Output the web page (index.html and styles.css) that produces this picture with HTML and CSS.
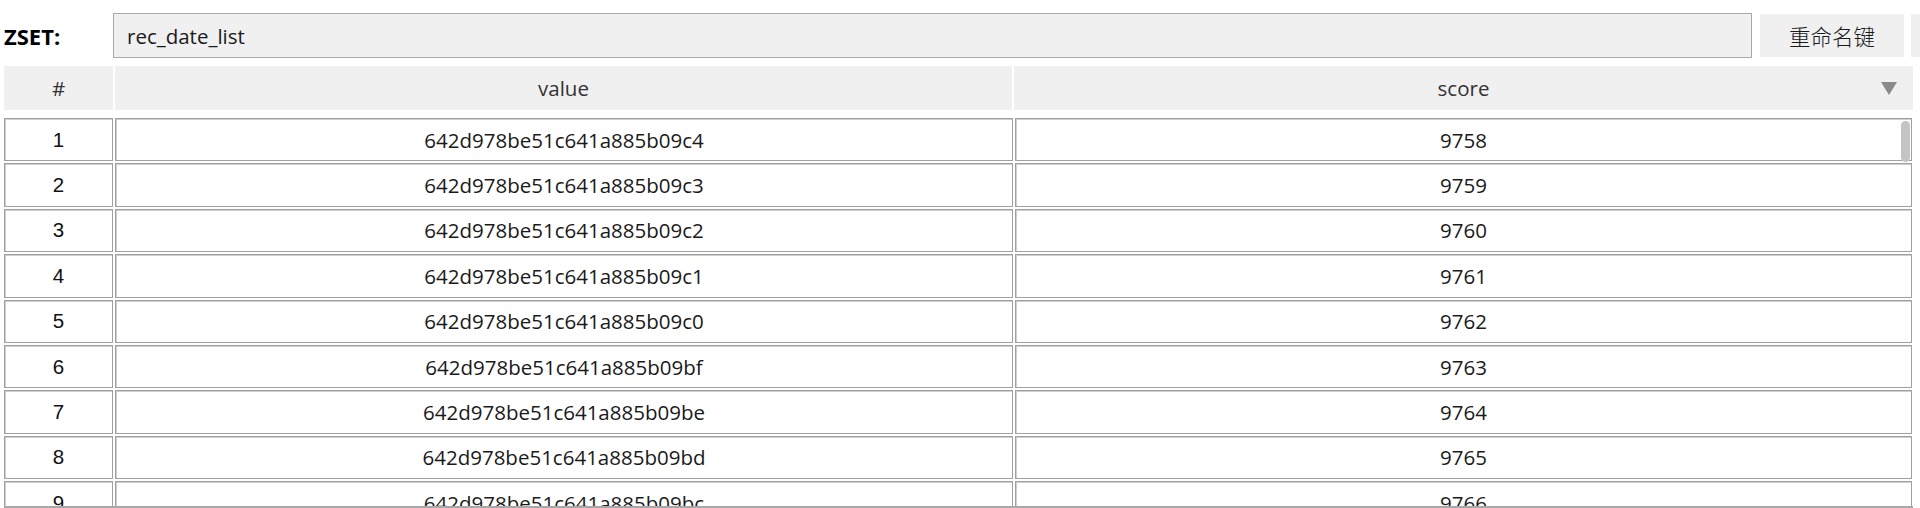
FILE: index.html
```html
<!DOCTYPE html>
<html lang="zh">
<head>
<meta charset="utf-8">
<title>ZSET</title>
<link rel="stylesheet" href="styles.css">
</head>
<body>
<div class="page">
  <div class="topbar">
    <div class="label">ZSET:</div>
    <div class="keyinput">rec_date_list</div>
    <button class="btn">重命名键</button>
    <button class="btn btn-cut"></button>
  </div>
  <div class="head">
    <div class="hcell">#</div>
    <div class="hcell">value</div>
    <div class="hcell hsort">score<span class="tri"></span></div>
  </div>
  <div class="list">
    <div class="row"><div class="cell num">1</div><div class="cell">642d978be51c641a885b09c4</div><div class="cell">9758</div></div>
    <div class="row"><div class="cell num">2</div><div class="cell">642d978be51c641a885b09c3</div><div class="cell">9759</div></div>
    <div class="row"><div class="cell num">3</div><div class="cell">642d978be51c641a885b09c2</div><div class="cell">9760</div></div>
    <div class="row"><div class="cell num">4</div><div class="cell">642d978be51c641a885b09c1</div><div class="cell">9761</div></div>
    <div class="row"><div class="cell num">5</div><div class="cell">642d978be51c641a885b09c0</div><div class="cell">9762</div></div>
    <div class="row"><div class="cell num">6</div><div class="cell">642d978be51c641a885b09bf</div><div class="cell">9763</div></div>
    <div class="row"><div class="cell num">7</div><div class="cell">642d978be51c641a885b09be</div><div class="cell">9764</div></div>
    <div class="row"><div class="cell num">8</div><div class="cell">642d978be51c641a885b09bd</div><div class="cell">9765</div></div>
    <div class="row"><div class="cell num">9</div><div class="cell">642d978be51c641a885b09bc</div><div class="cell">9766</div></div>
    <div class="row"><div class="cell num">10</div><div class="cell">642d978be51c641a885b09bb</div><div class="cell">9767</div></div>
    <div class="thumb"></div>
  </div>
</div>
</body>
</html>
```
FILE: styles.css
```css
html, body {
  margin: 0;
  padding: 0;
  background: #ffffff;
  overflow: hidden;
}
body {
  font-family: "Open Sans", "Noto Sans CJK SC", sans-serif;
  font-size: 20.5px;
  color: #1a1a1a;
}
.page {
  width: 1920px;
  height: 508px;
  display: flex;
  flex-direction: column;
  padding-left: 4px;
  box-sizing: border-box;
  overflow: hidden;
}
.topbar {
  margin-top: 13px;
  height: 45px;
  display: flex;
  align-items: center;
  overflow: hidden;
}
.topbar > * {
  flex: none;
}
.label {
  width: 109px;
  font-weight: 700;
  font-size: 22px;
  color: #000;
}
.keyinput {
  width: 1639px;
  height: 45px;
  box-sizing: border-box;
  border: 1px solid #a8a8a8;
  background: #f0f0f0;
  display: flex;
  align-items: center;
  padding-left: 13px;
}
.btn {
  margin-left: 8px;
  width: 144px;
  height: 43px;
  border: none;
  background: #f0f0f0;
  font-family: "Noto Sans CJK SC", sans-serif;
  font-size: 21.5px;
  font-weight: 300;
  color: #1a1a1a;
  padding: 0;
}
.btn-cut {
  margin-left: 7px;
  width: 20px;
}
.head {
  margin-top: 8px;
  height: 44px;
  width: 1909px;
  display: grid;
  grid-template-columns: 109px 897px 899px;
  column-gap: 2px;
}
.hcell {
  background: #f0f0f0;
  display: flex;
  align-items: center;
  justify-content: center;
  color: #333;
}
.hsort {
  position: relative;
}
.tri {
  position: absolute;
  right: 16px;
  top: 16px;
  width: 0;
  height: 0;
  border-left: 8.5px solid transparent;
  border-right: 8.5px solid transparent;
  border-top: 13px solid #8a8a8a;
}
.list {
  position: relative;
  margin-top: 8px;
  width: 1909px;
  flex: 1;
  overflow: hidden;
  display: flex;
  flex-direction: column;
  row-gap: 2px;
  border-bottom: 2px solid #a8a8a8;
}
.row {
  flex: none;
  height: 43.4px;
  display: grid;
  grid-template-columns: 109px 898px 897px;
  column-gap: 2px;
}
.cell {
  box-sizing: border-box;
  border: 1px solid #a0a0a0;
  box-shadow: inset 1px 1px 0 #cfcfcf;
  background: #fff;
  display: flex;
  align-items: center;
  justify-content: center;
  color: #1a1a1a;
}
.num {
  font-family: "Liberation Sans", Arial, sans-serif;
  font-size: 20.5px;
  color: #111;
}
.thumb {
  position: absolute;
  left: 1897px;
  top: 3px;
  width: 9px;
  height: 41px;
  border-radius: 5px;
  background: #c4c4c4;
}
```
